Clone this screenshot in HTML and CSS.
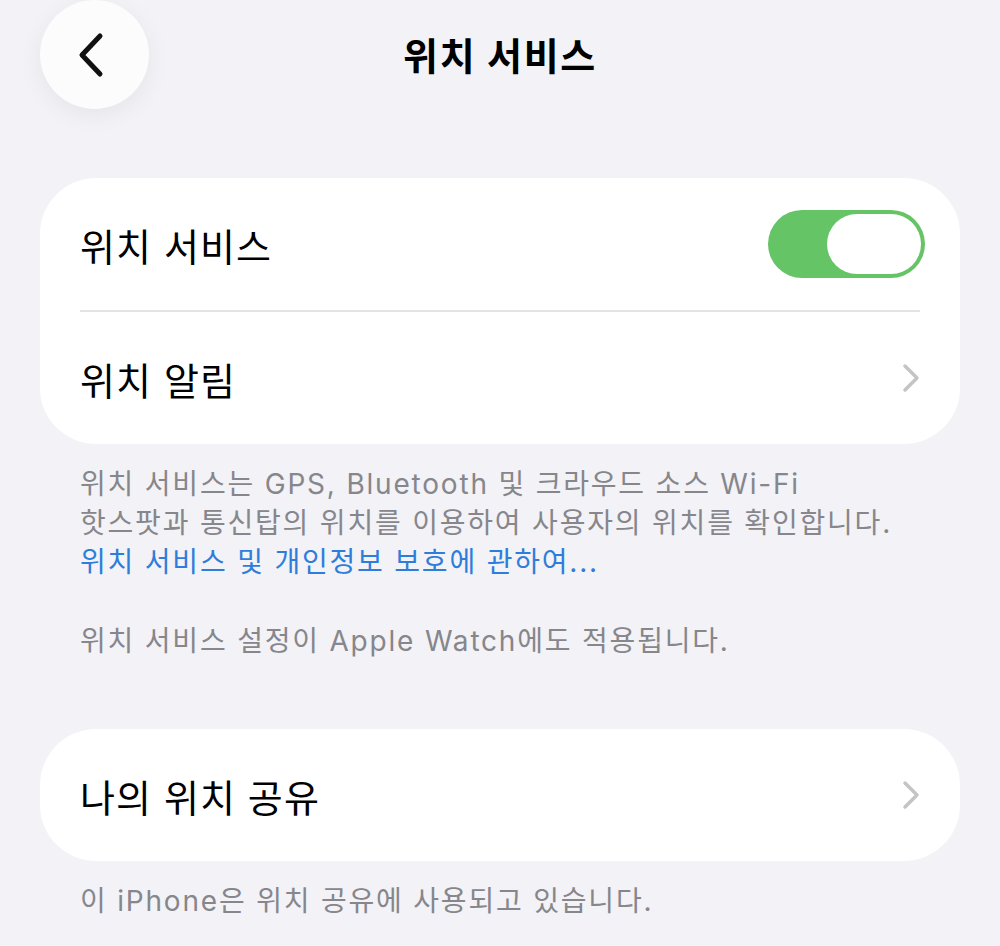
FILE: index.html
```html
<!DOCTYPE html>
<html lang="ko">
<head>
    <meta charset="UTF-8">
    <meta name="viewport" content="width=device-width, initial-scale=1.0">
    <title>위치 서비스</title>
    <link rel="stylesheet" href="styles.css">
</head>
<body>
    <div class="screen">
        <div class="navbar">
            <button class="back-btn" aria-label="뒤로">
                <svg width="36" height="46" viewBox="0 0 36 46">
                    <path d="M26 4 L8 23 L26 42" fill="none" stroke="#111" stroke-width="5" stroke-linecap="round" stroke-linejoin="round"/>
                </svg>
            </button>
            <h1 class="nav-title">위치 서비스</h1>
        </div>

        <div class="group">
            <div class="row">
                <span class="row-label">위치 서비스</span>
                <div class="toggle">
                    <div class="knob"></div>
                </div>
            </div>
            <div class="divider"></div>
            <div class="row">
                <span class="row-label">위치 알림</span>
                <svg class="chevron" width="18" height="30" viewBox="0 0 18 30">
                    <path d="M3 3 L15 15 L3 27" fill="none" stroke="#c4c4c7" stroke-width="3.5" stroke-linecap="round" stroke-linejoin="round"/>
                </svg>
            </div>
        </div>
        <div class="footnote">
            <p>위치 서비스는 GPS, Bluetooth 및 크라우드 소스 Wi-Fi<br>핫스팟과 통신탑의 위치를 이용하여 사용자의 위치를 확인합니다.<br><a href="#" class="link">위치 서비스 및 개인정보 보호에 관하여...</a></p>
            <p class="spaced">위치 서비스 설정이 Apple Watch에도 적용됩니다.</p>
        </div>

        <div class="group group-second">
            <div class="row">
                <span class="row-label">나의 위치 공유</span>
                <svg class="chevron" width="18" height="30" viewBox="0 0 18 30">
                    <path d="M3 3 L15 15 L3 27" fill="none" stroke="#c4c4c7" stroke-width="3.5" stroke-linecap="round" stroke-linejoin="round"/>
                </svg>
            </div>
        </div>
        <div class="footnote footnote-last">
            <p>이 iPhone은 위치 공유에 사용되고 있습니다.</p>
        </div>
    </div>
</body>
</html>
```

FILE: styles.css
```css
body {
    font-family: 'Inter', 'Noto Sans CJK KR', sans-serif;
    background-color: #f2f2f7;
    margin: 0;
    padding: 0;
    color: #000;
}
.screen {
    padding: 0 40px;
}
.navbar {
    position: relative;
    height: 110px;
    display: flex;
    align-items: center;
    justify-content: center;
}
.back-btn {
    position: absolute;
    left: 0;
    top: 0;
    width: 109px;
    height: 109px;
    border-radius: 50%;
    border: none;
    background-color: #fcfcfd;
    box-shadow: 0 6px 24px rgba(0, 0, 0, 0.06);
    display: flex;
    align-items: center;
    justify-content: center;
    padding: 0 6px 0 0;
}
.nav-title {
    margin: 0 0 4px;
    font-size: 38px;
    font-weight: 700;
    letter-spacing: 1.7px;
}
.group {
    margin-top: 68px;
    background-color: #fff;
    border-radius: 56px;
}
.group-second {
    margin-top: 68px;
}
.row {
    height: 132px;
    padding: 0 36px 0 40px;
    display: flex;
    align-items: center;
    justify-content: space-between;
}
.row-label {
    font-size: 38px;
    letter-spacing: 1.1px;
}
.divider {
    height: 2px;
    margin: 0 40px;
    background-color: #e3e3e6;
}
.toggle {
    width: 157px;
    height: 68px;
    border-radius: 34px;
    background-color: #65c466;
    display: flex;
    align-items: center;
    justify-content: flex-end;
    padding: 0 4px;
    box-sizing: border-box;
    margin-right: -1px;
}
.knob {
    width: 94px;
    height: 60px;
    border-radius: 30px;
    background-color: #fff;
}
.chevron {
    margin-right: 4px;
}
.footnote {
    padding: 21px 40px 0;
    color: #86868b;
    font-size: 28px;
    line-height: 39px;
    letter-spacing: 1.8px;
}
.footnote-last {
    padding-top: 21px;
}
.footnote p {
    margin: 0;
}
.footnote .spaced {
    margin-top: 40px;
}
.link {
    color: #2f7ddb;
    text-decoration: none;
}
```
